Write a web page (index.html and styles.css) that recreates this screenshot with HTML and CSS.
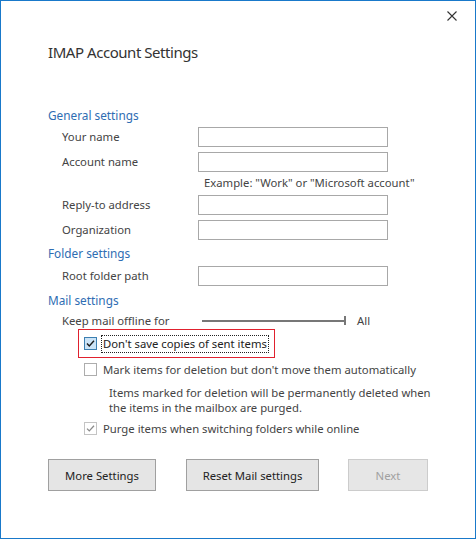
FILE: index.html
```html
<!DOCTYPE html>
<html>
<head>
<meta charset="utf-8">
<title>IMAP Account Settings</title>
<link rel="stylesheet" href="styles.css">
</head>
<body>
<div class="dialog">
  <div class="topbar">
    <svg class="close" width="10" height="10" viewBox="0 0 10 10" aria-label="Close"><path d="M0.5 0.5L9.5 9.5M9.5 0.5L0.5 9.5" stroke="#333" stroke-width="1.1" fill="none"/></svg>
  </div>
  <h1 class="title">IMAP Account Settings</h1>
  <div class="content">
    <div class="heading h-general">General settings</div>
    <div class="field"><span class="label">Your name</span><span class="input"></span></div>
    <div class="field gap"><span class="label">Account name</span><span class="input"></span></div>
    <div class="example">Example: "Work" or "Microsoft account"</div>
    <div class="field"><span class="label">Reply-to address</span><span class="input"></span></div>
    <div class="field gap"><span class="label">Organization</span><span class="input"></span></div>
    <div class="heading h-sub">Folder settings</div>
    <div class="field"><span class="label">Root folder path</span><span class="input"></span></div>
    <div class="heading h-sub h-mail">Mail settings</div>
    <div class="slider-row">
      <span class="label slabel">Keep mail offline for</span>
      <span class="track"></span><span class="tick"></span>
      <span class="all">All</span>
    </div>
    <div class="highlight">
      <span class="box checked-blue"><svg width="11" height="11" viewBox="0 0 11 11"><path d="M2 5.6L4.3 7.9L9 2.8" stroke="#1a1a1a" stroke-width="1.4" fill="none"/></svg></span>
      <span class="focus">Don't save copies of sent items</span>
    </div>
    <div class="check-row r2">
      <span class="box empty"></span>
      <span class="clabel">Mark items for deletion but don't move them automatically</span>
    </div>
    <div class="desc">Items marked for deletion will be permanently deleted when<br>the items in the mailbox are purged.</div>
    <div class="check-row r3">
      <span class="box checked-gray"><svg width="11" height="11" viewBox="0 0 11 11"><path d="M2 5.6L4.3 7.9L9 2.8" stroke="#8a8a8a" stroke-width="1.3" fill="none"/></svg></span>
      <span class="clabel">Purge items when switching folders while online</span>
    </div>
    <div class="buttons">
      <button class="btn b-more">More Settings</button>
      <button class="btn b-reset">Reset Mail settings</button>
      <button class="btn b-next" disabled>Next</button>
    </div>
  </div>
</div>
</body>
</html>
```
FILE: styles.css
```css
html, body {
  margin: 0;
  padding: 0;
  background: #fff;
}
.dialog {
  width: 476px;
  height: 539px;
  box-sizing: border-box;
  border: 1px solid #1979ca;
  background: #fff;
  font-family: "Noto Sans", "Open Sans", sans-serif;
  font-size: 11.3px;
  color: #444;
  display: flex;
  flex-direction: column;
}
.topbar {
  height: 36px;
  box-sizing: border-box;
  padding: 10px 18px 0 0;
  display: flex;
  justify-content: flex-end;
  align-items: flex-start;
}
.close { display: block; }
.title {
  margin: 5px 0 41px 47px;
  height: 22px;
  line-height: 20px;
  font-size: 15px;
  letter-spacing: -0.45px;
  font-weight: 400;
  color: #333;
}
.content {
  padding-left: 47px;
  display: flex;
  flex-direction: column;
}
.heading {
  color: #2e6db3;
  font-size: 11.8px;
}
.h-general { height: 22px; line-height: 21px; }
.h-sub { height: 26px; line-height: 27px; }
.h-mail { line-height: 28px; }
.field {
  display: flex;
  align-items: center;
  height: 20px;
  padding-left: 14px;
}
.field.gap { margin-top: 5px; }
.label { width: 136px; line-height: 18px; }
.input {
  width: 190px;
  height: 20px;
  box-sizing: border-box;
  border: 1px solid #a8a8a8;
  background: #fff;
}
.example {
  height: 23px;
  line-height: 22px;
  padding-left: 156px;
}
.slider-row {
  display: flex;
  align-items: center;
  height: 17px;
  padding-left: 14px;
}
.slabel { width: 140px; }
.track {
  width: 142px;
  height: 2px;
  background: #777;
}
.tick {
  width: 2px;
  height: 9px;
  background: #777;
}
.all { margin-left: 11px; }
.highlight {
  margin-left: 30px;
  width: 197px;
  height: 29px;
  box-sizing: border-box;
  border: 1px solid #e0212e;
  padding-left: 5px;
  display: flex;
  align-items: center;
}
.box {
  width: 13px;
  height: 13px;
  box-sizing: border-box;
  border: 1px solid #adadad;
  background: #fff;
  display: flex;
  align-items: center;
  justify-content: center;
  flex: none;
}
.box svg { display: block; }
.checked-blue {
  background: #cce4f7;
  border-color: #3c7fb1;
}
.checked-gray { border-color: #c4c4c4; }
.focus {
  margin-left: 4px;
  width: 168px;
  height: 18px;
  line-height: 15px;
  box-sizing: border-box;
  border: 1px dotted #222;
  padding-left: 1px;
  color: #222;
  white-space: nowrap;
}
.check-row {
  display: flex;
  align-items: center;
  padding-left: 36px;
}
.check-row .clabel { margin-left: 6px; line-height: 15px; }
.r2 { height: 23px; }
.r3 { height: 27px; }
.desc {
  padding-left: 61px;
  margin-top: 4px;
  line-height: 15px;
}
.buttons {
  display: flex;
  gap: 30px;
  margin-top: 17px;
}
.btn {
  height: 32px;
  box-sizing: border-box;
  border: 1px solid #a0a0a0;
  background: #e5e5e5;
  font-family: "Noto Sans", "Open Sans", sans-serif;
  font-size: 11.3px;
  color: #222;
  padding: 0;
  margin: 0;
}
.b-more { width: 108px; }
.b-reset { width: 133px; }
.b-next {
  width: 80px;
  margin-left: -1px;
  border-color: #cccccc;
  color: #a0a0a0;
  background: #e6e6e6;
}
```
